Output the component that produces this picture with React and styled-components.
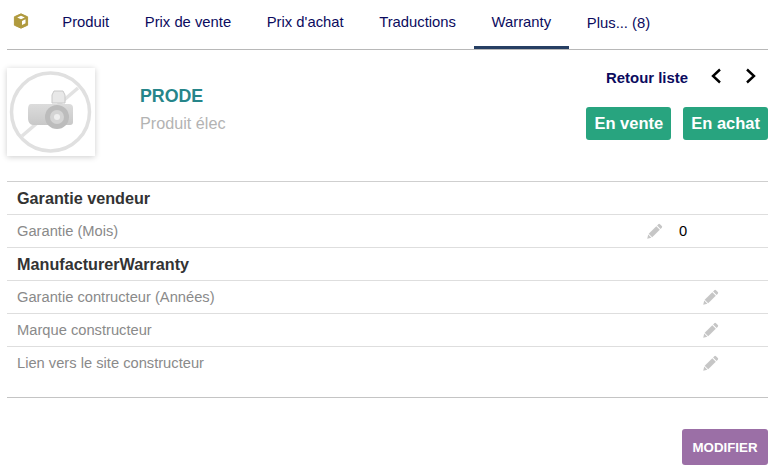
import React from 'react'
import styled, { createGlobalStyle } from 'styled-components'

const GlobalStyle = createGlobalStyle`
  html, body {
    margin: 0;
    padding: 0;
    background: #fff;
    font-family: "Liberation Sans", Arial, sans-serif;
  }
`

const tabs = ['Produit', 'Prix de vente', "Prix d'achat", 'Traductions', 'Warranty', 'Plus... (8)']

const Pencil = () => (
  <PencilIcon viewBox="0 0 16 16">
    <path d="M11.300 1.200a1.200 1.200 0 0 1 1.700 0l1.800 1.800a1.200 1.200 0 0 1 0 1.700l-1.200 1.200-3.500-3.500z" />
    <path d="M9.300 3.200l3.500 3.500-7.600 7.600-3.500-3.500z" />
    <path d="M1.200 11.600l3.200 3.200-4.200 1z" />
  </PencilIcon>
)

const BoxLogo = () => (
  <svg width="16" height="16" viewBox="0 0 16 16">
    <path d="M8 .8l6.600 3v8.400L8 15.200l-6.600-3V3.800z" fill="#b09a3e" stroke="#b09a3e" strokeLinejoin="round" />
    <path d="M8 2.800l3.800 1.700L8 6.300 4.200 4.500z" fill="#fff" />
    <path d="M9 8l3.500-1.700v3.900L9 12z" fill="#fff" />
  </svg>
)

const NoPhoto = () => (
  <svg width="88" height="88" viewBox="0 0 88 88">
    <defs>
      <linearGradient id="body" x1="0" y1="0" x2="0" y2="1">
        <stop offset="0" stopColor="#dcdcdc" />
        <stop offset="1" stopColor="#c8c8c8" />
      </linearGradient>
    </defs>
    <circle cx="43.500" cy="44" r="39" fill="none" stroke="#e0e0e0" strokeWidth="3.500" />
    <line x1="15" y1="68" x2="71" y2="20" stroke="#e2e2e2" strokeWidth="3.500" />
    <path d="M45 35v-8l2-4h9l2 4v8z" fill="#e8e8e8" stroke="#c8c8c8" />
    <path d="M24 36h38a4 4 0 0 1 4 4v14a3 3 0 0 1-3 3H26c-3 0-5-3-5-7v-9c0-3 1-5 3-5z" fill="url(#body)" />
    <circle cx="50" cy="49" r="12" fill="#bcbcbc" />
    <circle cx="50" cy="49" r="7" fill="#d4d4d4" />
    <circle cx="50" cy="49" r="3" fill="#eeeeee" />
  </svg>
)

const Chevron = ({ dir }) => (
  <svg width="12" height="16" viewBox="0 0 12 16">
    <path
      d={dir === 'left' ? 'M10 1.500L3 8l7 6.500' : 'M2 1.500L9 8l-7 6.500'}
      fill="none"
      stroke="#000"
      strokeWidth="2.400"
    />
  </svg>
)

const App = () => {
  return (
    <Page>
      <GlobalStyle />
      <Nav>
        <Logo><BoxLogo /></Logo>
        {tabs.map((t) => (
          <Tab key={t} $active={t === 'Warranty'} $more={t.startsWith('Plus')}>{t}</Tab>
        ))}
      </Nav>
      <Header>
        <Photo><NoPhoto /></Photo>
        <Names>
          <Ref>PRODE</Ref>
          <Label>Produit élec</Label>
        </Names>
        <Actions>
          <Pager>
            <BackLink>Retour liste</BackLink>
            <Arrow $gap={23}><Chevron dir="left" /></Arrow>
            <Arrow $gap={11}><Chevron dir="right" /></Arrow>
          </Pager>
          <Badges>
            <Badge>En vente</Badge>
            <Badge>En achat</Badge>
          </Badges>
        </Actions>
      </Header>
      <Table>
        <TitleRow>Garantie vendeur</TitleRow>
        <Row>
          <Key>Garantie (Mois)</Key>
          <EditCell $shift><Pencil /></EditCell>
          <Value>0</Value>
        </Row>
        <TitleRow>ManufacturerWarranty</TitleRow>
        <Row>
          <Key>Garantie contructeur (Années)</Key>
          <EditCell><Pencil /></EditCell>
        </Row>
        <Row>
          <Key>Marque constructeur</Key>
          <EditCell><Pencil /></EditCell>
        </Row>
        <Row>
          <Key>Lien vers le site constructeur</Key>
          <EditCell><Pencil /></EditCell>
        </Row>
      </Table>
      <Footer>
        <ModifyButton>MODIFIER</ModifyButton>
      </Footer>
    </Page>
  )
}

export default App

const Page = styled.div`
  width: 773px;
  height: 471px;
  padding: 0 5px 0 7px;
  box-sizing: border-box;
  overflow: hidden;
`
const Nav = styled.nav`
  display: flex;
  align-items: stretch;
  height: 50px;
  box-sizing: border-box;
  border-bottom: 1px solid #b8b8b8;
`
const Logo = styled.div`
  display: flex;
  align-items: center;
  width: 37.500px;
  padding: 0 0 7px 6px;
  box-sizing: border-box;
`
const Tab = styled.a`
  display: block;
  padding: ${(p) => (p.$more ? '15px 0 0 18px' : '14px 17.800px 0')};
  height: 49px;
  box-sizing: border-box;
  font-size: 14.800px;
  color: #0b0b5e;
  border-bottom: ${(p) => (p.$active ? '3px solid #263f63' : 'none')};
  white-space: nowrap;
`
const Header = styled.div`
  display: flex;
  height: 132px;
  padding-top: 18px;
  box-sizing: border-box;
  border-bottom: 1px solid #cfcfcf;
`
const Photo = styled.div`
  width: 88px;
  height: 88px;
  box-shadow: 0 1px 6px rgba(0, 0, 0, 0.2);
  background: #fff;
  flex: none;
`
const Names = styled.div`
  flex: 1;
  padding: 19px 0 0 45px;
`
const Ref = styled.div`
  font-size: 17.800px;
  font-weight: bold;
  color: #26858a;
  line-height: 18px;
`
const Label = styled.div`
  font-size: 16.200px;
  color: #b3b3b3;
  margin-top: 9px;
  line-height: 18px;
`
const Actions = styled.div`
  display: flex;
  flex-direction: column;
  align-items: flex-end;
`
const Pager = styled.div`
  display: flex;
  align-items: center;
  height: 20px;
`
const BackLink = styled.span`
  font-size: 14.900px;
  font-weight: bold;
  color: #0b0b5e;
  margin-right: 22px;
`
const Arrow = styled.span`
  display: flex;
  width: 12px;
  margin-right: ${(p) => p.$gap}px;
  margin-bottom: 4px;
`
const Badges = styled.div`
  display: flex;
  gap: 12px;
  margin-top: 19px;
`
const Badge = styled.div`
  height: 33px;
  line-height: 33px;
  padding: 0 8px;
  background: #28a47f;
  color: #fff;
  font-size: 16.500px;
  font-weight: bold;
  border-radius: 3px;
`
const Table = styled.div`
  border-bottom: 1px solid #c4c4c4;
  padding-bottom: 17px;
`
const TitleRow = styled.div`
  height: 33px;
  line-height: 32px;
  padding-left: 10px;
  box-sizing: border-box;
  font-size: 16.200px;
  font-weight: bold;
  color: #333;
  border-bottom: 1px solid #dedede;
`
const Row = styled.div`
  display: flex;
  align-items: center;
  height: 33px;
  padding-left: 10px;
  box-sizing: border-box;
  border-bottom: 1px solid #dedede;
  &:last-child {
    border-bottom-color: transparent;
  }
`
const Key = styled.div`
  flex: 1;
  font-size: 14.700px;
  color: #8a8a8a;
`
const EditCell = styled.div`
  display: flex;
  margin-right: ${(p) => (p.$shift ? '16px' : '49px')};
`
const PencilIcon = styled.svg`
  width: 16px;
  height: 16px;
  fill: #c6c6c6;
`
const Value = styled.div`
  font-size: 14.700px;
  color: #000;
  width: 89px;
`
const Footer = styled.div`
  display: flex;
  justify-content: flex-end;
  padding-top: 31px;
`
const ModifyButton = styled.button`
  width: 86px;
  height: 36px;
  border: none;
  border-radius: 3px;
  background: #9b6fa6;
  color: #fff;
  font-family: inherit;
  font-size: 13.300px;
  font-weight: bold;
  padding: 0;
`
